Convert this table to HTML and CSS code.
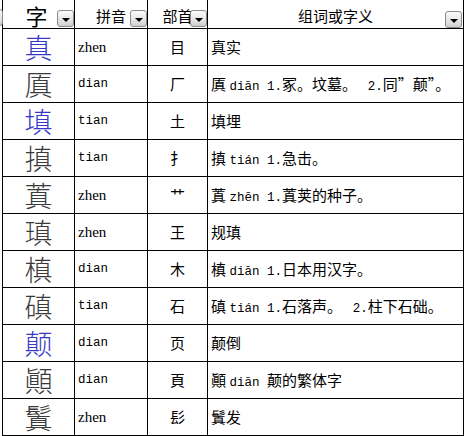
FILE: index.html
```html
<!DOCTYPE html>
<html lang="zh">
<head>
<meta charset="utf-8">
<title>字表</title>
<link rel="stylesheet" href="styles.css">
</head>
<body>
<div class="wrap">
  <span class="dd dd-cut"></span>
  <div class="sheet">
    <div class="hd hd-zi">字<span class="dd"></span></div>
    <div class="hd">拼音<span class="dd"></span></div>
    <div class="hd">部首<span class="dd"></span></div>
    <div class="hd">组词或字义<span class="dd dd-last"></span></div>

    <div class="zi blue">真</div><div class="py serif">zhen</div><div class="bs">目</div><div class="df">真实</div>
    <div class="zi">厧</div><div class="py mono">dian</div><div class="bs">厂</div><div class="df">厧 <span class="m">diān 1.</span>冢。坟墓。　 <span class="m">2.</span>同”颠”。</div>
    <div class="zi blue">填</div><div class="py mono">tian</div><div class="bs">土</div><div class="df">填埋</div>
    <div class="zi">搷</div><div class="py mono">tian</div><div class="bs">扌</div><div class="df">搷 <span class="m">tián 1.</span>急击。</div>
    <div class="zi">蒖</div><div class="py serif">zhen</div><div class="bs">艹</div><div class="df">蒖 <span class="m">zhēn 1.</span>蒖荚的种子。</div>
    <div class="zi">瑱</div><div class="py serif">zhen</div><div class="bs">王</div><div class="df">规瑱</div>
    <div class="zi">槙</div><div class="py mono">dian</div><div class="bs">木</div><div class="df">槙 <span class="m">diān 1.</span>日本用汉字。</div>
    <div class="zi">磌</div><div class="py mono">tian</div><div class="bs">石</div><div class="df">磌 <span class="m">tián 1.</span>石落声。　 <span class="m">2.</span>柱下石础。</div>
    <div class="zi blue">颠</div><div class="py mono">dian</div><div class="bs">页</div><div class="df">颠倒</div>
    <div class="zi">顚</div><div class="py mono">dian</div><div class="bs">頁</div><div class="df">顚 <span class="m">diān </span>颠的繁体字</div>
    <div class="zi">鬒</div><div class="py serif">zhen</div><div class="bs">髟</div><div class="df">鬒发</div>
  </div>
</div>
</body>
</html>
```
FILE: styles.css
```css
html, body {
  margin: 0;
  padding: 0;
  background: #ffffff;
}
body {
  font-family: "Noto Sans CJK SC", "Liberation Serif", serif;
  color: #000;
  overflow: hidden;
}
.wrap {
  position: relative;
  margin-left: 2px;
  width: 462px;
}
.sheet {
  display: grid;
  grid-template-columns: 71px 72px 59px 255px;
  grid-template-rows: 28px repeat(11, 36px);
  gap: 1px;
  padding: 0 1px 1px 1px;
  background: #000;
}
.sheet > div {
  background: #fff;
  white-space: pre;
  line-height: 36px;
}
.hd {
  position: relative;
  text-align: center;
  font-size: 15px;
  padding-top: 3px;
  box-sizing: border-box;
}
.sheet > .hd {
  line-height: 26px;
}
.sheet > .hd-zi {
  font-size: 22px;
  padding-top: 2px;
  padding-right: 4px;
}
.dd {
  position: absolute;
  right: 0;
  bottom: 1px;
  width: 17px;
  height: 17px;
  box-sizing: border-box;
  border: 1px solid #8a8a8a;
  border-radius: 3px;
  background: linear-gradient(#fbfbfb, #e6e6e6 55%, #cfcfcf);
}
.dd::after {
  content: "";
  position: absolute;
  left: 4px;
  top: 7px;
  border-left: 4px solid transparent;
  border-right: 4px solid transparent;
  border-top: 4px solid #000;
}
.dd-last {
  bottom: 0;
  right: 1px;
}
.dd-cut {
  left: -16px;
  top: 9px;
  bottom: auto;
}
.zi {
  text-align: center;
  font-size: 28px;
  font-weight: 300;
  color: #3a3a3a;
}
.zi.blue {
  color: #3838c8;
}
.py {
  padding-left: 3px;
}
.serif {
  font-family: "Liberation Serif", serif;
  font-size: 15px;
}
.mono {
  font-family: "Liberation Mono", monospace;
  font-size: 12.5px;
}
.bs {
  text-align: center;
  font-size: 15px;
}
.df {
  padding-left: 3px;
  font-size: 15px;
}
.m {
  font-family: "Liberation Mono", monospace;
  font-size: 12.5px;
}
```
